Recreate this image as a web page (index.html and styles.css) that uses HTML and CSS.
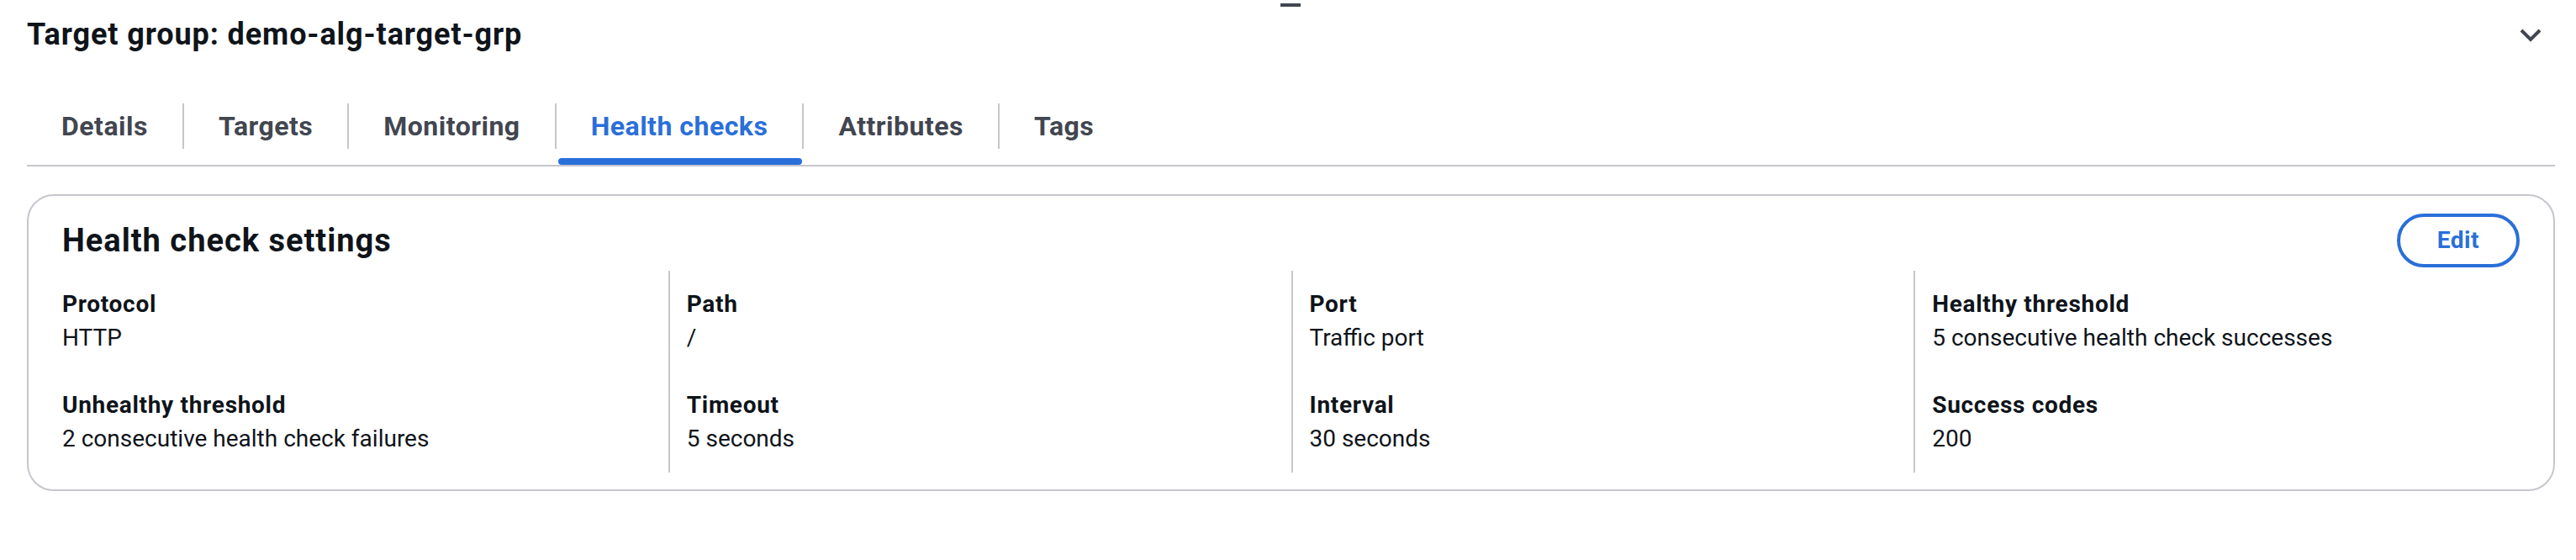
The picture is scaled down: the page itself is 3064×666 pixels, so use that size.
FILE: index.html
```html
<!DOCTYPE html>
<html lang="en">
<head>
<meta charset="utf-8">
<title>Target group: demo-alg-target-grp</title>
<link rel="stylesheet" href="styles.css">
</head>
<body>
<div class="drag-handle"></div>
<main class="page">
  <header class="section-header">
    <h2 class="section-title">Target group: demo-alg-target-grp</h2>
    <button class="expand-btn" aria-label="Collapse">
      <svg width="32" height="32" viewBox="0 0 32 32" aria-hidden="true"><path d="M5 11 L16 22 L27 11" fill="none" stroke="#424650" stroke-width="4" stroke-linejoin="miter" stroke-linecap="butt"/></svg>
    </button>
  </header>

  <nav class="tabs">
    <div class="tab"><span class="tab-label">Details</span></div>
    <div class="tab"><span class="tab-label sep">Targets</span></div>
    <div class="tab"><span class="tab-label sep">Monitoring</span></div>
    <div class="tab active"><span class="tab-label sep">Health checks</span></div>
    <div class="tab"><span class="tab-label sep">Attributes</span></div>
    <div class="tab"><span class="tab-label sep">Tags</span></div>
  </nav>

  <section class="container">
    <div class="container-header">
      <h3 class="container-title">Health check settings</h3>
      <button class="btn-edit">Edit</button>
    </div>
    <div class="kv-grid">
      <div class="col">
        <div class="pair"><div class="label">Protocol</div><div class="value">HTTP</div></div>
        <div class="pair"><div class="label">Unhealthy threshold</div><div class="value">2 consecutive health check failures</div></div>
      </div>
      <div class="col">
        <div class="pair"><div class="label">Path</div><div class="value">/</div></div>
        <div class="pair"><div class="label">Timeout</div><div class="value">5 seconds</div></div>
      </div>
      <div class="col">
        <div class="pair"><div class="label">Port</div><div class="value">Traffic port</div></div>
        <div class="pair"><div class="label">Interval</div><div class="value">30 seconds</div></div>
      </div>
      <div class="col">
        <div class="pair"><div class="label">Healthy threshold</div><div class="value">5 consecutive health check successes</div></div>
        <div class="pair"><div class="label">Success codes</div><div class="value">200</div></div>
      </div>
    </div>
  </section>
</main>
</body>
</html>
```

FILE: styles.css
```css
* { box-sizing: border-box; }

html, body {
  margin: 0;
  padding: 0;
  background: #ffffff;
}

body {
  font-family: Roboto, "Open Sans", "Liberation Sans", sans-serif;
  color: #0f141a;
  font-size: 28px;
  line-height: 40px;
  position: relative;
}

.drag-handle {
  position: absolute;
  left: 1523px;
  top: 4px;
  width: 24px;
  height: 4px;
  background: #424650;
}

.page {
  padding: 0 25px 0 32px;
}

.section-header {
  display: flex;
  align-items: center;
  justify-content: space-between;
  padding-top: 19px;
}

.section-title {
  margin: 0;
  font-size: 36px;
  line-height: 44px;
  font-weight: 700;
  letter-spacing: 0.9px;
  color: #0f141a;
}

.expand-btn {
  display: flex;
  align-items: center;
  justify-content: center;
  border: 0;
  background: transparent;
  padding: 0;
  margin-right: 13px;
  width: 32px;
  height: 32px;
}

.tabs {
  display: flex;
  margin-top: 60px;
  border-bottom: 2px solid #c6c6cd;
}

.tab {
  position: relative;
  padding-bottom: 19px;
}

.tab-label {
  display: block;
  padding: 7px 41px;
  font-size: 32px;
  line-height: 40px;
  font-weight: 700;
  letter-spacing: 0.5px;
  color: #424650;
  white-space: nowrap;
}

.tab-label.sep {
  border-left: 2px solid #c6c6cd;
}

.tab.active .tab-label {
  color: #2a6fd9;
}

.tab.active::after {
  content: "";
  position: absolute;
  left: 4px;
  right: 0;
  bottom: 0;
  height: 8px;
  border-radius: 4px;
  background: #2a6fd9;
}

.container {
  margin-top: 33px;
  border: 2px solid #c6c6cd;
  border-radius: 32px;
  padding: 21px 40px 20px;
}

.container-header {
  display: flex;
  align-items: center;
  justify-content: space-between;
  height: 64px;
}

.container-title {
  margin: 0;
  font-size: 38px;
  line-height: 48px;
  font-weight: 700;
  letter-spacing: 1px;
  color: #0f141a;
}

.btn-edit {
  font-family: inherit;
  font-size: 28px;
  line-height: 40px;
  font-weight: 700;
  letter-spacing: 0.5px;
  color: #2a6fd9;
  background: #ffffff;
  border: 4px solid #2a6fd9;
  border-radius: 32px;
  padding: 8px 44px;
  height: 64px;
}

.kv-grid {
  display: grid;
  grid-template-columns: repeat(4, minmax(0, 1fr));
  margin: 4px -20px 0;
}

.col {
  display: flex;
  flex-direction: column;
  gap: 40px;
  padding: 20px;
  border-left: 2px solid #c6c6cd;
}

.col:first-child {
  border-left: none;
}

.label {
  font-weight: 700;
  letter-spacing: 0.7px;
  color: #0f141a;
}

.value {
  color: #0f141a;
}
```
